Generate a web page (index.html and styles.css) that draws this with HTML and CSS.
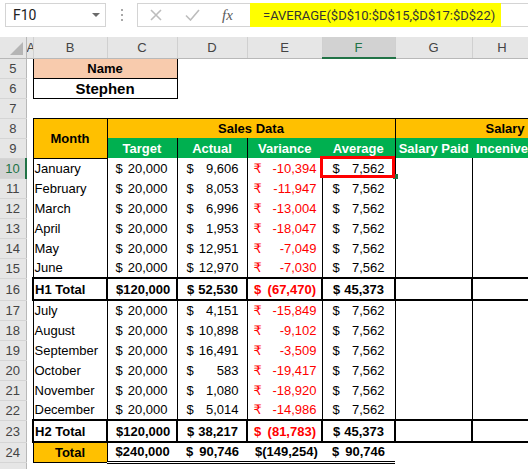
FILE: index.html
```html
<!DOCTYPE html>
<html lang="en">
<head>
<meta charset="utf-8">
<title>Excel AVERAGE</title>
<link rel="stylesheet" href="styles.css">
</head>
<body>
<div class="topbar">
  <div class="namebox"><span>F10</span><span class="caret"></span></div>
  <div class="dots"><i></i><i></i><i></i></div>
  <div class="fbar">
    <div class="icons">
      <svg class="ic-x" width="12" height="12" viewBox="0 0 12 12"><path d="M1 1 L11 11 M11 1 L1 11" stroke="#bdbdbd" stroke-width="1.6" fill="none"/></svg>
      <svg class="ic-ok" width="15" height="12" viewBox="0 0 15 12"><path d="M1 6.5 L5.5 11 L14 1" stroke="#bdbdbd" stroke-width="1.6" fill="none"/></svg>
      <span class="fx">fx</span>
    </div>
    <div class="formula">=AVERAGE($D$10:$D$15,$D$17:$D$22)</div>
  </div>
</div>
<div class="sheet-wrap">
<table class="sheet">
  <colgroup>
    <col class="w-rh"><col class="w-a"><col class="w-b"><col class="w-c"><col class="w-d"><col class="w-e"><col class="w-f"><col class="w-g"><col class="w-h">
  </colgroup>
  <tr class="hdr">
    <th class="corner"><div class="tri"><svg width="13" height="13" viewBox="0 0 13 13"><polygon points="13,0 13,13 0,13" fill="#b5b5b5"/></svg></div></th>
    <th class="ch">A</th><th class="ch">B</th><th class="ch">C</th><th class="ch">D</th><th class="ch">E</th><th class="ch sel-col">F</th><th class="ch">G</th><th class="ch">H</th>
  </tr>
  <tr><th class="rh">5</th><td></td><td class="box peach" colspan="2">Name</td><td></td><td></td><td></td><td></td><td></td></tr>
  <tr><th class="rh">6</th><td></td><td class="box who" colspan="2">Stephen</td><td></td><td></td><td></td><td></td><td></td></tr>
  <tr><th class="rh">7</th><td></td><td></td><td></td><td></td><td></td><td></td><td></td><td></td></tr>
  <tr><th class="rh">8</th><td></td><td class="box orange ctr" rowspan="2">Month</td><td class="orange ctr grp" colspan="4">Sales Data</td><td class="orange grp sal" colspan="2">Salary Calculation</td></tr>
  <tr><th class="rh">9</th><td></td><td class="green bl br">Target</td><td class="green br">Actual</td><td class="green">Variance</td><td class="green br">Average</td><td class="green">Salary Paid</td><td class="green inc">Incenive</td></tr>

  <tr><th class="rh sel-row">10</th><td></td><td class="v m">January</td><td class="v cc"><div class="acc"><span>$</span><span>20,000</span></div></td><td class="v cd"><div class="acc"><span>$</span><span>9,606</span></div></td><td class="v ce"><div class="acc"><span>₹</span><span>-10,394</span></div></td><td class="v cf"><div class="acc"><span>$</span><span>7,562</span></div></td><td class="v"></td><td class="v"></td></tr>
  <tr><th class="rh">11</th><td></td><td class="v m">February</td><td class="v cc"><div class="acc"><span>$</span><span>20,000</span></div></td><td class="v cd"><div class="acc"><span>$</span><span>8,053</span></div></td><td class="v ce"><div class="acc"><span>₹</span><span>-11,947</span></div></td><td class="v cf"><div class="acc"><span>$</span><span>7,562</span></div></td><td class="v"></td><td class="v"></td></tr>
  <tr><th class="rh">12</th><td></td><td class="v m">March</td><td class="v cc"><div class="acc"><span>$</span><span>20,000</span></div></td><td class="v cd"><div class="acc"><span>$</span><span>6,996</span></div></td><td class="v ce"><div class="acc"><span>₹</span><span>-13,004</span></div></td><td class="v cf"><div class="acc"><span>$</span><span>7,562</span></div></td><td class="v"></td><td class="v"></td></tr>
  <tr><th class="rh">13</th><td></td><td class="v m">April</td><td class="v cc"><div class="acc"><span>$</span><span>20,000</span></div></td><td class="v cd"><div class="acc"><span>$</span><span>1,953</span></div></td><td class="v ce"><div class="acc"><span>₹</span><span>-18,047</span></div></td><td class="v cf"><div class="acc"><span>$</span><span>7,562</span></div></td><td class="v"></td><td class="v"></td></tr>
  <tr><th class="rh">14</th><td></td><td class="v m">May</td><td class="v cc"><div class="acc"><span>$</span><span>20,000</span></div></td><td class="v cd"><div class="acc"><span>$</span><span>12,951</span></div></td><td class="v ce"><div class="acc"><span>₹</span><span>-7,049</span></div></td><td class="v cf"><div class="acc"><span>$</span><span>7,562</span></div></td><td class="v"></td><td class="v"></td></tr>
  <tr><th class="rh">15</th><td></td><td class="v m">June</td><td class="v cc"><div class="acc"><span>$</span><span>20,000</span></div></td><td class="v cd"><div class="acc"><span>$</span><span>12,970</span></div></td><td class="v ce"><div class="acc"><span>₹</span><span>-7,030</span></div></td><td class="v cf"><div class="acc"><span>$</span><span>7,562</span></div></td><td class="v"></td><td class="v"></td></tr>
  <tr class="tall"><th class="rh">16</th><td></td><td class="t m">H1 Total</td><td class="t cc"><div class="acc"><span>$</span><span>120,000</span></div></td><td class="t cd"><div class="acc"><span>$</span><span>52,530</span></div></td><td class="t ce"><div class="acc"><span>$</span><span>(67,470)</span></div></td><td class="t cf"><div class="acc"><span>$</span><span>45,373</span></div></td><td class="t"></td><td class="t thin-l"></td></tr>

  <tr><th class="rh">17</th><td></td><td class="v m">July</td><td class="v cc"><div class="acc"><span>$</span><span>20,000</span></div></td><td class="v cd"><div class="acc"><span>$</span><span>4,151</span></div></td><td class="v ce"><div class="acc"><span>₹</span><span>-15,849</span></div></td><td class="v cf"><div class="acc"><span>$</span><span>7,562</span></div></td><td class="v"></td><td class="v"></td></tr>
  <tr><th class="rh">18</th><td></td><td class="v m">August</td><td class="v cc"><div class="acc"><span>$</span><span>20,000</span></div></td><td class="v cd"><div class="acc"><span>$</span><span>10,898</span></div></td><td class="v ce"><div class="acc"><span>₹</span><span>-9,102</span></div></td><td class="v cf"><div class="acc"><span>$</span><span>7,562</span></div></td><td class="v"></td><td class="v"></td></tr>
  <tr><th class="rh">19</th><td></td><td class="v m">September</td><td class="v cc"><div class="acc"><span>$</span><span>20,000</span></div></td><td class="v cd"><div class="acc"><span>$</span><span>16,491</span></div></td><td class="v ce"><div class="acc"><span>₹</span><span>-3,509</span></div></td><td class="v cf"><div class="acc"><span>$</span><span>7,562</span></div></td><td class="v"></td><td class="v"></td></tr>
  <tr><th class="rh">20</th><td></td><td class="v m">October</td><td class="v cc"><div class="acc"><span>$</span><span>20,000</span></div></td><td class="v cd"><div class="acc"><span>$</span><span>583</span></div></td><td class="v ce"><div class="acc"><span>₹</span><span>-19,417</span></div></td><td class="v cf"><div class="acc"><span>$</span><span>7,562</span></div></td><td class="v"></td><td class="v"></td></tr>
  <tr><th class="rh">21</th><td></td><td class="v m">November</td><td class="v cc"><div class="acc"><span>$</span><span>20,000</span></div></td><td class="v cd"><div class="acc"><span>$</span><span>1,080</span></div></td><td class="v ce"><div class="acc"><span>₹</span><span>-18,920</span></div></td><td class="v cf"><div class="acc"><span>$</span><span>7,562</span></div></td><td class="v"></td><td class="v"></td></tr>
  <tr><th class="rh">22</th><td></td><td class="v m">December</td><td class="v cc"><div class="acc"><span>$</span><span>20,000</span></div></td><td class="v cd"><div class="acc"><span>$</span><span>5,014</span></div></td><td class="v ce"><div class="acc"><span>₹</span><span>-14,986</span></div></td><td class="v cf"><div class="acc"><span>$</span><span>7,562</span></div></td><td class="v"></td><td class="v"></td></tr>
  <tr class="tall"><th class="rh">23</th><td></td><td class="t m">H2 Total</td><td class="t cc"><div class="acc"><span>$</span><span>120,000</span></div></td><td class="t cd"><div class="acc"><span>$</span><span>38,217</span></div></td><td class="t ce"><div class="acc"><span>$</span><span>(81,783)</span></div></td><td class="t cf"><div class="acc"><span>$</span><span>45,373</span></div></td><td class="t"></td><td class="t"></td></tr>
  <tr><th class="rh">24</th><td></td><td class="box orange ctr">Total</td><td class="dbl cc"><div class="acc"><span>$</span><span>240,000</span></div></td><td class="dbl cd"><div class="acc"><span>$</span><span>90,746</span></div></td><td class="dbl ce blk"><div class="acc"><span>$</span><span>(149,254)</span></div></td><td class="dbl cf"><div class="acc"><span>$</span><span>90,746</span></div></td><td></td><td></td></tr>
  <tr><th class="rh"></th><td></td><td></td><td></td><td></td><td></td><td></td><td></td><td></td></tr>
</table>
<div class="handle"></div>
<div class="selbox"></div>
</div>
</body>
</html>
```
FILE: styles.css
```css
html, body {
  margin: 0;
  padding: 0;
  overflow: hidden;
  background: #fff;
}
body {
  width: 528px;
  height: 469px;
  font-family: "Liberation Sans", Arial, "DejaVu Sans", sans-serif;
}

/* ---------- formula bar ---------- */
.topbar {
  display: flex;
  align-items: flex-start;
  height: 37px;
  box-sizing: border-box;
  padding: 3px 0 0 5px;
}
.namebox {
  width: 101px;
  height: 24px;
  box-sizing: border-box;
  border: 1px solid #d4d4d4;
  display: flex;
  align-items: center;
  justify-content: space-between;
  padding: 0 5px 0 7px;
  font: 14px Roboto, "Liberation Sans", sans-serif;
  color: #222;
}
.caret {
  width: 0;
  height: 0;
  border-left: 4px solid transparent;
  border-right: 4px solid transparent;
  border-top: 4px solid #6a6a6a;
}
.dots {
  width: 31px;
  height: 24px;
  display: flex;
  flex-direction: column;
  align-items: center;
  justify-content: center;
  gap: 3px;
}
.dots i {
  display: block;
  width: 2px;
  height: 2px;
  background: #a8a8a8;
}
.fbar {
  flex: 1;
  height: 24px;
  box-sizing: border-box;
  border: 1px solid #d4d4d4;
  border-right: none;
  display: flex;
  align-items: stretch;
}
.icons {
  width: 112px;
  display: flex;
  align-items: center;
}
.ic-x { margin-left: 12px; }
.ic-ok { margin-left: 23px; }
.fx {
  margin-left: 22px;
  font: italic 15px "Liberation Serif", "DejaVu Serif", serif;
  color: #5a5a5a;
}
.formula {
  width: 251px;
  margin: -1px 0;
  background: #ffff00;
  display: flex;
  align-items: center;
  padding-left: 13px;
  box-sizing: border-box;
  font: 13px Roboto, "Liberation Sans", sans-serif;
  color: #333;
  white-space: nowrap;
}

/* ---------- sheet ---------- */
.sheet-wrap {
  position: relative;
  width: 528px;
  overflow: hidden;
}
.sheet {
  border-collapse: collapse;
  table-layout: fixed;
  width: 532px;
  font-size: 13px;
  color: #000;
}
.w-rh { width: 26px; }
.w-a { width: 7px; }
.w-b { width: 74px; }
.w-c { width: 70px; }
.w-d { width: 70px; }
.w-e { width: 75px; }
.w-f { width: 73px; }
.w-g { width: 77px; }
.w-h { width: 60px; }

.sheet tr { height: 20px; }
.sheet tr.tall { height: 22px; }
.sheet td, .sheet th {
  padding: 0;
  white-space: nowrap;
  overflow: hidden;
  vertical-align: middle;
  line-height: 15px;
}

.ch, .rh, .corner {
  background: #e6e6e6;
  color: #444;
  font-weight: normal;
  text-align: center;
}
.corner, .ch {
  height: 20px;
  border-right: 1px solid #d0d0d0;
  border-bottom: 1px solid #b8b8b8;
}
.corner { border-right-color: #b8b8b8; }
.tri {
  display: flex;
  justify-content: flex-end;
  align-items: flex-end;
  height: 20px;
  padding: 0 3px 2px 0;
  box-sizing: border-box;
}
.rh {
  border-bottom: 1px solid #d5d5d5;
  border-right: 1px solid #b8b8b8;
}
.sel-col {
  background: #d2d2d2;
  color: #217346;
  border-bottom: 2px solid #217346;
}
.sel-row {
  background: #d2d2d2;
  color: #217346;
  border-right: 2px solid #217346;
}

.box { border: 1px solid #000; }
.ctr { text-align: center; }
.peach {
  background: #f8cbad;
  font-weight: bold;
  text-align: center;
}
.who {
  font-weight: bold;
  font-size: 15px;
  text-align: center;
}
.orange {
  background: #ffc000;
  font-weight: bold;
}
.grp {
  border-top: 1px solid #000;
  border-left: 1px solid #000;
  border-right: 1px solid #000;
}
.sheet td.sal { padding-left: 90px; }
.green {
  background: #00b050;
  color: #fff;
  font-weight: bold;
  text-align: center;
}
.bl { border-left: 1px solid #000; }
.br { border-right: 1px solid #000; }
.sheet td.inc { text-align: left; padding-left: 4px; }

.v {
  border-left: 1px solid #000;
  border-right: 1px solid #000;
}
.t {
  border: 2px solid #000;
  font-weight: bold;
}
.sheet td.thin-l { border-left: 1px solid #000; }
.dbl {
  border-bottom: 3px double #000;
  font-weight: bold;
}
.sheet td.m { padding-left: 1px; }

.acc {
  display: flex;
  justify-content: space-between;
}
.cc .acc { padding: 0 9px 0 8px; }
.cd .acc { padding: 0 8px 0 9px; }
.ce .acc { padding: 0 5px 0 6px; color: #ff0000; }
.ce.blk .acc { color: #000; padding-left: 8px; }
.cf .acc { padding: 0 10px 0 10px; }

/* selection overlay */
.handle {
  position: absolute;
  left: 393px;
  top: 137px;
  width: 5px;
  height: 5px;
  background: #217346;
}
.selbox {
  position: absolute;
  left: 320px;
  top: 119px;
  width: 75px;
  height: 22px;
  border: 3px solid #ff0000;
  box-sizing: border-box;
}
```
